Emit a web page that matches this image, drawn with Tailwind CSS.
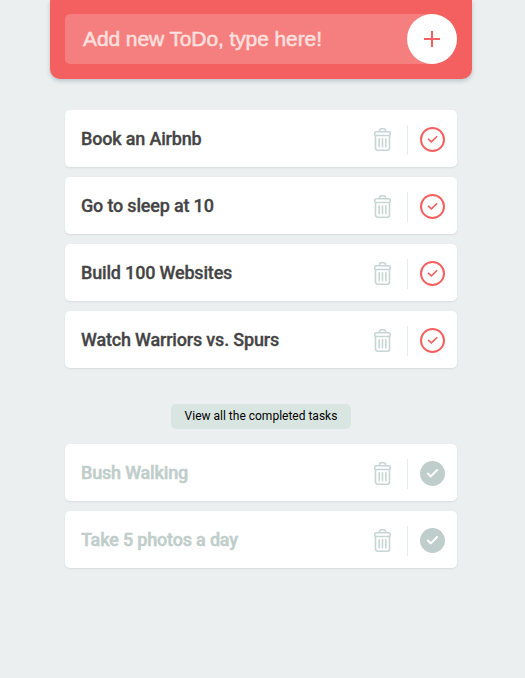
<!DOCTYPE html>
<html lang="en">
<head>
<meta charset="utf-8">
<title>ToDo</title>
<script src="https://cdn.jsdelivr.net/npm/@tailwindcss/browser@4"></script>
</head>
<body class="min-h-screen bg-[#ebeff0] font-['Roboto',sans-serif]">
<svg class="hidden">
  <symbol id="trash" viewBox="0 0 17 24">
    <g fill="none" stroke="#c8d6d3" stroke-width="1.6" stroke-linecap="round">
      <path d="M5.5 3.4V2.6a1.8 1.8 0 0 1 1.8-1.8h2.4a1.8 1.8 0 0 1 1.8 1.8v.8"/>
      <rect x=".8" y="3.7" width="15.4" height="3.8" rx="1.3"/>
      <path d="M1.5 7.6V20a2.2 2.2 0 0 0 2.2 2.2h9.6a2.2 2.2 0 0 0 2.2-2.2V7.6"/>
      <path d="M5.2 10.8v8M8.5 10.8v8M11.8 10.8v8"/>
    </g>
  </symbol>
  <symbol id="check" viewBox="0 0 25 25">
    <circle cx="12.5" cy="12.5" r="11.5" fill="none" stroke="#f3605f" stroke-width="2"/>
    <path d="M8 11.9l3.4 3 5.8-5.7" fill="none" stroke="#f3605f" stroke-width="1.6"/>
  </symbol>
  <symbol id="done" viewBox="0 0 25 25">
    <circle cx="12.5" cy="12.5" r="12.5" fill="#c0cecb"/>
    <path d="M7.3 12.1l3.5 3.3 6.9-7" fill="none" stroke="#fff" stroke-width="2"/>
  </symbol>
</svg>
<header class="ml-[50px] flex h-[79px] w-[422px] items-start rounded-b-[10px] bg-[#f3605f] px-[15px] pt-[14px] shadow-[0_2px_4px_rgba(44,62,80,0.25)]">
  <div class="flex h-[50px] w-full items-center justify-between rounded-l-[5px] rounded-r-[25px] bg-white/20 pl-[18px]">
    <span class="pb-[1px] text-[21px] tracking-[-0.1px] text-[#fee0df] font-['Liberation_Sans',sans-serif] [-webkit-text-stroke:0.5px_#fee0df]">Add new ToDo, type here!</span>
    <button class="flex size-[50px] items-center justify-center rounded-full bg-white" aria-label="Add">
      <svg class="size-4" viewBox="0 0 16 16"><path d="M8 0v16M0 8h16" stroke="#f3605f" stroke-width="2"/></svg>
    </button>
  </div>
</header>
<main class="ml-[65px] w-[392px] pt-[31px] text-[18px] font-medium tracking-[-0.18px] text-[#444] [-webkit-text-stroke:0.3px]">
  <ul class="flex flex-col gap-[10px]">
    <li class="flex h-[57px] items-center rounded-[5px] bg-white pr-3 pl-4 shadow-[0_1px_2px_rgba(44,62,80,0.1)]"><span class="flex-1">Book an Airbnb</span><svg class="mt-[2px] h-6 w-[17px]"><use href="#trash"/></svg><i class="ml-4 mt-[3px] h-[30px] w-px bg-[#e6ebeb]"></i><svg class="ml-3 mt-[2px] size-[25px]"><use href="#check"/></svg></li>
    <li class="flex h-[57px] items-center rounded-[5px] bg-white pr-3 pl-4 shadow-[0_1px_2px_rgba(44,62,80,0.1)]"><span class="flex-1">Go to sleep at 10</span><svg class="mt-[2px] h-6 w-[17px]"><use href="#trash"/></svg><i class="ml-4 mt-[3px] h-[30px] w-px bg-[#e6ebeb]"></i><svg class="ml-3 mt-[2px] size-[25px]"><use href="#check"/></svg></li>
    <li class="flex h-[57px] items-center rounded-[5px] bg-white pr-3 pl-4 shadow-[0_1px_2px_rgba(44,62,80,0.1)]"><span class="flex-1">Build 100 Websites</span><svg class="mt-[2px] h-6 w-[17px]"><use href="#trash"/></svg><i class="ml-4 mt-[3px] h-[30px] w-px bg-[#e6ebeb]"></i><svg class="ml-3 mt-[2px] size-[25px]"><use href="#check"/></svg></li>
    <li class="flex h-[57px] items-center rounded-[5px] bg-white pr-3 pl-4 shadow-[0_1px_2px_rgba(44,62,80,0.1)]"><span class="flex-1">Watch Warriors vs. Spurs</span><svg class="mt-[2px] h-6 w-[17px]"><use href="#trash"/></svg><i class="ml-4 mt-[3px] h-[30px] w-px bg-[#e6ebeb]"></i><svg class="ml-3 mt-[2px] size-[25px]"><use href="#check"/></svg></li>
  </ul>
  <button class="mt-9 ml-[106px] flex h-[25px] w-[180px] items-center justify-center rounded-[5px] bg-[#d8e5e0] pb-px text-[12px] font-normal tracking-normal text-black [-webkit-text-stroke:0]">View all the completed tasks</button>
  <ul class="mt-[15px] flex flex-col gap-[10px] text-[#c0cecb]">
    <li class="flex h-[57px] items-center rounded-[5px] bg-white pr-3 pl-4 shadow-[0_1px_2px_rgba(44,62,80,0.1)]"><span class="flex-1 [-webkit-text-stroke:0.5px_#c0cecb]">Bush Walking</span><svg class="mt-[2px] h-6 w-[17px]"><use href="#trash"/></svg><i class="ml-4 mt-[3px] h-[30px] w-px bg-[#e6ebeb]"></i><svg class="ml-3 mt-[2px] size-[25px]"><use href="#done"/></svg></li>
    <li class="flex h-[57px] items-center rounded-[5px] bg-white pr-3 pl-4 shadow-[0_1px_2px_rgba(44,62,80,0.1)]"><span class="flex-1 [-webkit-text-stroke:0.5px_#c0cecb]">Take 5 photos a day</span><svg class="mt-[2px] h-6 w-[17px]"><use href="#trash"/></svg><i class="ml-4 mt-[3px] h-[30px] w-px bg-[#e6ebeb]"></i><svg class="ml-3 mt-[2px] size-[25px]"><use href="#done"/></svg></li>
  </ul>
</main>
</body>
</html>
